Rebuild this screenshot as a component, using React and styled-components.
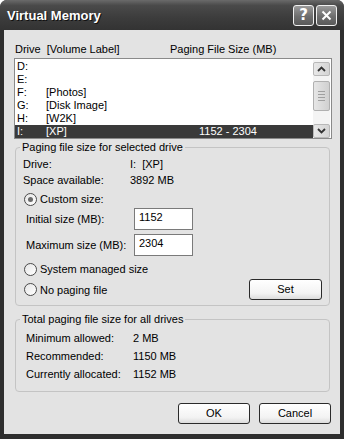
import React from 'react';
import styled, { createGlobalStyle } from 'styled-components';

const GlobalStyle = createGlobalStyle`
  html, body {
    margin: 0;
    padding: 0;
    background: #ffffff;
  }
  body {
    font-family: 'Liberation Sans', Arial, sans-serif;
    font-size: 11px;
    color: #000;
  }
`;

const Window = styled.div`
  width: 344px;
  height: 439px;
  box-sizing: border-box;
  background: #2e2e2e;
  border-radius: 7px 7px 0 0;
  display: flex;
  flex-direction: column;
  overflow: hidden;
`;

const TitleBar = styled.div`
  height: 30px;
  flex-shrink: 0;
  display: flex;
  align-items: center;
  padding: 0 7px 0 7px;
  background: linear-gradient(180deg, #6a6a6a 0%, #4a4a4a 18%, #3c3c3c 60%, #333 100%);
`;

const Title = styled.div`
  flex: 1;
  font-family: 'Liberation Sans', Arial, sans-serif;
  font-weight: bold;
  font-size: 13px;
  color: #fff;
  text-shadow: 1px 1px 0 #111;
  margin-top: 1px;
`;

const CaptionButton = styled.div`
  width: 19px;
  height: 19px;
  margin-left: 2px;
  border: 1px solid #f0f0f0;
  border-radius: 3px;
  background: linear-gradient(180deg, #9a9a9a 0%, #6e6e6e 55%, #5a5a5a 100%);
  display: flex;
  align-items: center;
  justify-content: center;
  color: #fff;
  font-family: 'DejaVu Sans', sans-serif;
  font-weight: bold;
  font-size: 15px;
  line-height: 1;
`;

const Body = styled.div`
  flex: 1;
  margin: 0 4px 5px 4px;
  background: #e3e3e3;
  padding: 13px 8px 9px 10px;
  display: flex;
  flex-direction: column;
`;

const ListHeader = styled.div`
  display: grid;
  grid-template-columns: 155px 1fr;
  height: 13px;
  line-height: 13px;
  padding-left: 1px;
  margin-bottom: 2px;
`;

const ListBox = styled.div`
  height: 81px;
  box-sizing: border-box;
  border: 1px solid #8a8a8a;
  background: #fff;
  padding: 1px 1px 0 0;
  display: flex;
`;

const Rows = styled.div`
  flex: 1;
  display: flex;
  flex-direction: column;
`;

const Row = styled.div`
  display: grid;
  grid-template-columns: 29px 153px 1fr;
  height: 13px;
  line-height: 13px;
  padding-left: 2px;
  background: ${p => (p.$selected ? '#3a3a3a' : 'transparent')};
  color: ${p => (p.$selected ? '#fff' : '#000')};
`;

const ScrollBar = styled.div`
  width: 17px;
  display: flex;
  flex-direction: column;
  background: #f4f4f4;
  padding-top: 2px;
`;

const ScrollButton = styled.div`
  height: 14px;
  box-sizing: border-box;
  border: 1px solid #b8b8b8;
  border-radius: 2px;
  background: linear-gradient(90deg, #e8e8e8, #d4d4d4);
  display: flex;
  align-items: center;
  justify-content: center;
`;

const Thumb = styled.div`
  height: 30px;
  margin: 5px 0 auto;
  box-sizing: border-box;
  border: 1px solid #b0b0b0;
  border-radius: 2px;
  background: linear-gradient(90deg, #e6e6e6, #d0d0d0);
  display: flex;
  flex-direction: column;
  align-items: center;
  justify-content: center;
  gap: 2px;

  span {
    width: 7px;
    height: 1px;
    background: #a0a0a0;
  }
`;

const Group = styled.fieldset`
  margin: ${p => p.$mt}px 2px 0 1px;
  padding: 0 7px ${p => p.$pb}px 7px;
  border: 1px solid #c4c4c4;
  border-radius: 4px;
  min-width: 0;
`;

const Legend = styled.legend`
  padding: 0 2px;
  margin-left: -3px;
  line-height: 13px;
  height: 13px;
`;

const InfoRow = styled.div`
  display: grid;
  grid-template-columns: 107px 1fr;
  height: ${p => p.$h || 16}px;
  line-height: ${p => p.$h || 16}px;
  margin-top: ${p => p.$mt || 0}px;
  padding-left: ${p => p.$indent || 0}px;
`;

const RadioRow = styled.div`
  display: flex;
  align-items: center;
  height: ${p => p.$h || 16}px;
  margin-top: ${p => p.$mt || 0}px;
  padding-left: 1px;
`;

const RadioCircle = styled.span`
  width: 13px;
  height: 13px;
  box-sizing: border-box;
  border: 1px solid #4a4a4a;
  border-radius: 50%;
  background: linear-gradient(135deg, #e6e6e6, #ffffff);
  display: flex;
  align-items: center;
  justify-content: center;
  margin-right: 3px;

  &::after {
    content: '';
    display: ${p => (p.$checked ? 'block' : 'none')};
    width: 5px;
    height: 5px;
    border-radius: 50%;
    background: #6a6a6a;
  }
`;

const SizeRow = styled.div`
  display: grid;
  grid-template-columns: 108px 59px;
  align-items: center;
  margin-top: ${p => p.$mt}px;
  padding-left: 3px;
`;

const SizeInput = styled.div`
  height: 22px;
  box-sizing: border-box;
  border: 1px solid #7a7a7a;
  background: #fff;
  padding: 2px 0 0 4px;
  line-height: 13px;
`;

const PushButton = styled.div`
  width: ${p => p.$w || 72}px;
  height: 21px;
  box-sizing: border-box;
  border: 1px solid #2a2a2a;
  border-radius: 3px;
  background: linear-gradient(180deg, #ffffff 0%, #f3f3f3 70%, #dcdcdc 100%);
  display: flex;
  align-items: center;
  justify-content: center;
  line-height: 13px;
`;

const SetRow = styled.div`
  display: flex;
  align-items: center;
  justify-content: space-between;
  margin-top: 2px;
`;

const Footer = styled.div`
  display: flex;
  justify-content: flex-end;
  gap: 9px;
  margin-top: 11px;
  padding-right: 1px;
`;

const Chevron = ({ up }) => (
  <svg width="9" height="6" viewBox="0 0 9 6">
    <path
      d={up ? 'M1 5 L4.5 1.5 L8 5' : 'M1 1 L4.5 4.5 L8 1'}
      fill="none"
      stroke="#333"
      strokeWidth="1.8"
    />
  </svg>
);

const drives = [
  { letter: 'D:', label: '', size: '' },
  { letter: 'E:', label: '', size: '' },
  { letter: 'F:', label: '[Photos]', size: '' },
  { letter: 'G:', label: '[Disk Image]', size: '' },
  { letter: 'H:', label: '[W2K]', size: '' },
  { letter: 'I:', label: '[XP]', size: '1152 - 2304', selected: true },
];

export default function App() {
  return (
    <>
      <GlobalStyle />
      <Window>
        <TitleBar>
          <Title>Virtual Memory</Title>
          <CaptionButton>?</CaptionButton>
          <CaptionButton>
            <svg width="11" height="11" viewBox="0 0 11 11">
              <path d="M1.5 1.5 L9.5 9.5 M9.5 1.5 L1.5 9.5" stroke="#fff" strokeWidth="2" />
            </svg>
          </CaptionButton>
        </TitleBar>

        <Body>
          <ListHeader>
            <span>Drive&nbsp;&nbsp;[Volume Label]</span>
            <span>Paging File Size (MB)</span>
          </ListHeader>

          <ListBox>
            <Rows>
              {drives.map(d => (
                <Row key={d.letter} $selected={d.selected}>
                  <span>{d.letter}</span>
                  <span>{d.label}</span>
                  <span>{d.size}</span>
                </Row>
              ))}
            </Rows>
            <ScrollBar>
              <ScrollButton><Chevron up /></ScrollButton>
              <Thumb><span /><span /><span /><span /></Thumb>
              <ScrollButton><Chevron /></ScrollButton>
            </ScrollBar>
          </ListBox>

          <Group $mt={2} $pb={5}>
            <Legend>Paging file size for selected drive</Legend>
            <InfoRow $mt={2}>
              <span>Drive:</span>
              <span>I:&nbsp;&nbsp;[XP]</span>
            </InfoRow>
            <InfoRow>
              <span>Space available:</span>
              <span>3892 MB</span>
            </InfoRow>
            <RadioRow $mt={3}>
              <RadioCircle $checked />
              <span>Custom size:</span>
            </RadioRow>
            <SizeRow $mt={1}>
              <span>Initial size (MB):</span>
              <SizeInput>1152</SizeInput>
            </SizeRow>
            <SizeRow $mt={4}>
              <span>Maximum size (MB):</span>
              <SizeInput>2304</SizeInput>
            </SizeRow>
            <RadioRow $mt={5}>
              <RadioCircle />
              <span>System managed size</span>
            </RadioRow>
            <SetRow>
              <RadioRow>
                <RadioCircle />
                <span>No paging file</span>
              </RadioRow>
              <PushButton $w={73}>Set</PushButton>
            </SetRow>
          </Group>

          <Group $mt={7} $pb={8}>
            <Legend>Total paging file size for all drives</Legend>
            <InfoRow $h={18} $mt={3} $indent={3}>
              <span>Minimum allowed:</span>
              <span>2 MB</span>
            </InfoRow>
            <InfoRow $h={18} $indent={3}>
              <span>Recommended:</span>
              <span>1150 MB</span>
            </InfoRow>
            <InfoRow $h={18} $indent={3}>
              <span>Currently allocated:</span>
              <span>1152 MB</span>
            </InfoRow>
          </Group>

          <Footer>
            <PushButton>OK</PushButton>
            <PushButton>Cancel</PushButton>
          </Footer>
        </Body>
      </Window>
    </>
  );
}
